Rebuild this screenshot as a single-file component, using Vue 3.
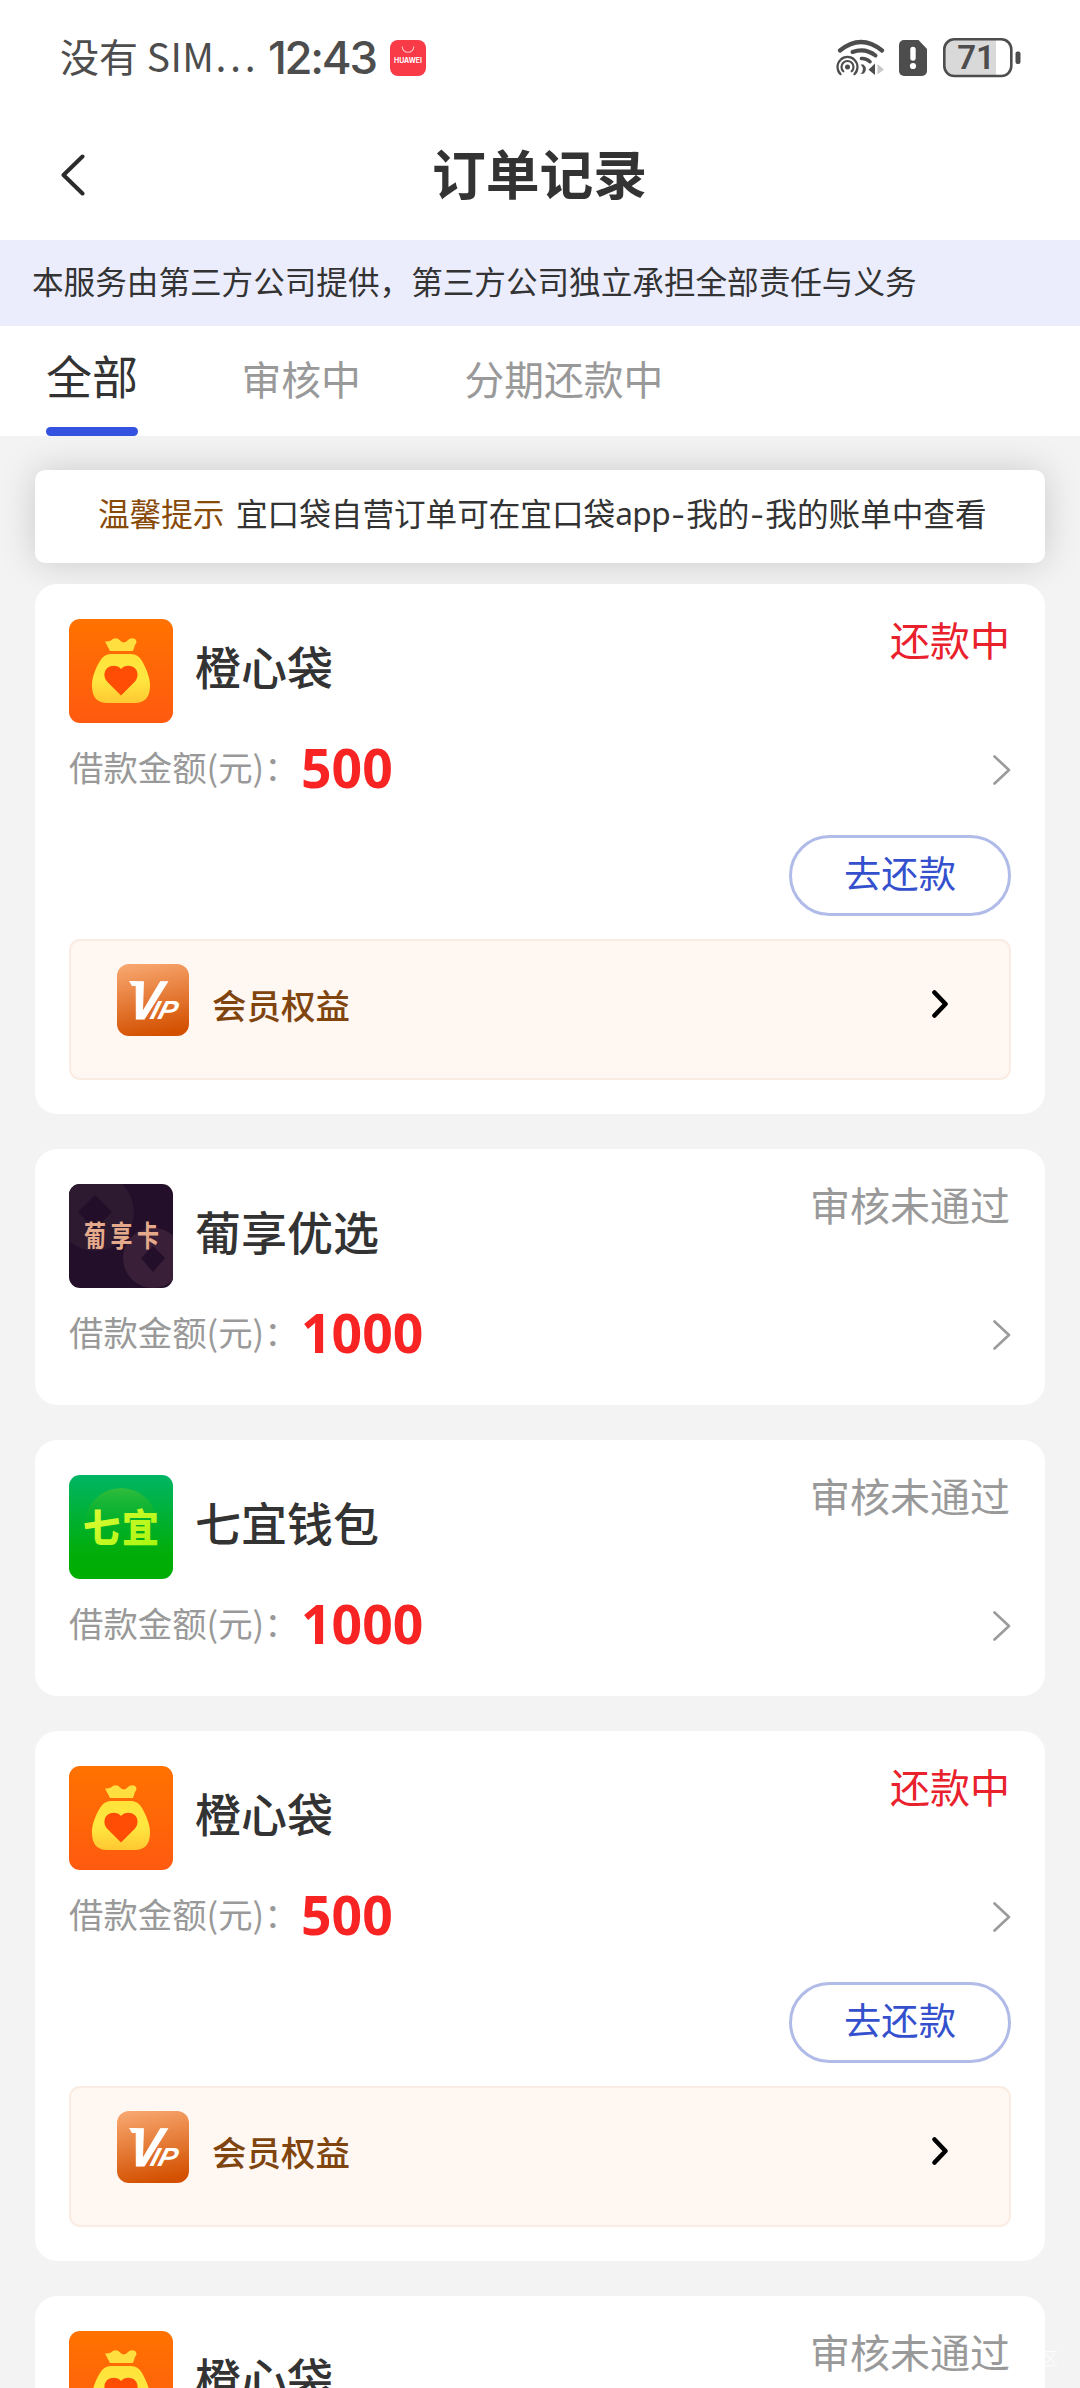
<script setup>
const tabs = [
  { label: '全部', active: true },
  { label: '审核中' },
  { label: '分期还款中' },
]

const orders = [
  { name: '橙心袋', brand: 'orange', amount: 500, status: '还款中', repay: true },
  { name: '葡享优选', brand: 'grape', amount: 1000, status: '审核未通过' },
  { name: '七宜钱包', brand: 'green', amount: 1000, status: '审核未通过' },
  { name: '橙心袋', brand: 'orange', amount: 500, status: '还款中', repay: true },
  { name: '橙心袋', brand: 'orange', amount: 500, status: '审核未通过' },
]
</script>

<template>
  <div class="page">
    <div class="statusbar">
      <span class="carrier">没有 <span class="sim-label">SIM…</span></span>
      <span class="clock">12:43</span>
      <svg class="store" width="36" height="36" viewBox="0 0 36 36">
        <rect width="36" height="36" rx="8" fill="#f93b47" />
        <path d="M12.2 6.5a5.8 5.8 0 0 0 11.6 0" fill="none" stroke="#ffc9cc" stroke-width="1.1" />
        <text x="18" y="23.3" text-anchor="middle" textLength="28" lengthAdjust="spacingAndGlyphs" class="store-text">HUAWEI</text>
      </svg>
      <span class="spacer"></span>
      <svg class="wifi" width="50" height="40" viewBox="0 0 50 40">
        <g fill="none" stroke="#4d4d4d" stroke-linecap="round">
          <path d="M4 12.500Q25-4.500 46 12.500" stroke-width="4.200" />
          <path d="M16.500 14Q29 9.500 39.500 17.500" stroke-width="4" />
          <path d="M25.500 20.500Q30 20 34 23.700" stroke-width="3.600" />
          <path d="M4.600 36.200A10 10 0 1 1 18.400 36.200" stroke-width="2.200" />
          <path d="M7.300 33.300A6 6 0 1 1 15.700 33.300" stroke-width="2.200" />
        </g>
        <circle cx="11.500" cy="29" r="2.500" fill="#4d4d4d" />
        <path d="M24.500 26.500q5 4.500 0 9.500l3.500-.5q4-5-.5-9z" fill="#4d4d4d" />
        <path d="M39 25.500v11.500l-6.500-5.200z" fill="#4d4d4d" />
        <path d="M41.500 26v10.500l6.500-5z" fill="#c8c8c8" />
      </svg>
      <svg class="sim" width="28" height="36" viewBox="0 0 28 36">
        <path d="M5 0h14.500L28 9v22a5 5 0 0 1-5 5H5a5 5 0 0 1-5-5V5a5 5 0 0 1 5-5z" fill="#4d4d4d" />
        <path d="M14 9.500v8.500" stroke="#fff" stroke-width="5.400" stroke-linecap="round" />
        <circle cx="14" cy="26" r="3.100" fill="#fff" />
      </svg>
      <svg class="battery" width="78" height="40" viewBox="0 0 78 40">
        <path d="M12 2h41v36H12A10 10 0 0 1 2 28V12A10 10 0 0 1 12 2z" fill="#d9d9d9" />
        <rect x="1.300" y="1.300" width="67" height="36.700" rx="10" fill="none" stroke="#4d4d4d" stroke-width="2.600" />
        <rect x="72.500" y="13.500" width="5" height="12.500" rx="2" fill="#4d4d4d" />
        <text x="33" y="31" text-anchor="middle" class="battery-text">71</text>
      </svg>
    </div>

    <header class="nav">
      <svg class="back" width="26" height="42" viewBox="0 0 26 42">
        <path d="M22.500 2.500L3.500 21l19 18.500" fill="none" stroke="#2b2b2b" stroke-width="4" stroke-linecap="round" stroke-linejoin="round" />
      </svg>
      <h1>订单记录</h1>
    </header>

    <div class="notice">本服务由第三方公司提供，第三方公司独立承担全部责任与义务</div>

    <nav class="tabs">
      <span v-for="t in tabs" :key="t.label" class="tab" :class="{ active: t.active }">{{ t.label }}</span>
    </nav>

    <main>
      <div class="tip">
        <span class="tip-title">温馨提示</span>
        <span>宜口袋自营订单可在宜口袋</span><span class="latin app">app</span><span class="latin dash">-</span><span>我的</span><span class="latin dash">-</span><span>我的账单中查看</span>
      </div>

      <section v-for="(o, i) in orders" :key="i" class="card">
        <div class="head">
          <svg v-if="o.brand === 'orange'" class="logo" viewBox="0 0 104 104">
            <defs>
              <linearGradient id="orangeBg" x1="0" y1="0" x2="0" y2="1">
                <stop offset="0" stop-color="#ff7200" /><stop offset="1" stop-color="#ff5a10" />
              </linearGradient>
              <linearGradient id="bag" x1="0" y1="0" x2="0" y2="1">
                <stop offset="0" stop-color="#ffe23a" /><stop offset=".5" stop-color="#ffe840" /><stop offset="1" stop-color="#ffc832" />
              </linearGradient>
            </defs>
            <rect width="104" height="104" fill="url(#orangeBg)" />
            <path d="M41 32L36 22.500Q39 22.800 42 21.500C45 18.500 48.500 18.500 51 21.500Q55 25.500 58.500 21.500C61.500 18 67 18.500 67.500 22.500Q67.500 24 66 26L64 32z" fill="#ffdf40" />
            <path d="M42 35H62Q69 35 73 42C78 51 81.500 60 81 68C80.500 79 75 84 66 84H38C29 84 23.500 79 23 68C22.500 60 26 50 31 42Q35 35 42 35z" fill="url(#bag)" />
            <path d="M52 76.500L38 62.500C33.500 57.500 35 49 41.500 47.200Q48 45.500 52 50Q56 45.500 62.500 47.200C69 49 70.500 57.500 66 62.500z" fill="#ff4d05" />
          </svg>
          <svg v-else-if="o.brand === 'grape'" class="logo" viewBox="0 0 104 104">
            <rect width="104" height="104" fill="#230f29" />
            <circle cx="26" cy="28" r="39" fill="#2d1930" />
            <path d="M26 11L43 28 26 45 9 28z" fill="#220e28" />
            <circle cx="84" cy="74" r="30" fill="#392038" />
            <path d="M84 62L96 74 84 88 72 74z" fill="#230f29" />
            <text x="15" y="0" textLength="75" transform="translate(0 62.500) scale(1 1.320)" class="grape-text">葡享卡</text>
          </svg>
          <svg v-else class="logo" viewBox="0 0 104 104">
            <defs>
              <linearGradient id="greenBg" x1="0" y1="0" x2="0" y2="1">
                <stop offset="0" stop-color="#00b564" /><stop offset=".75" stop-color="#00ad09" /><stop offset="1" stop-color="#00ad00" />
              </linearGradient>
              <linearGradient id="greenOrb" x1="0" y1="0" x2="0" y2="1">
                <stop offset="0" stop-color="#32bc3c" /><stop offset=".65" stop-color="#00ad12" stop-opacity="0" />
              </linearGradient>
              <linearGradient id="lime" x1="0" y1="0" x2="1" y2="1">
                <stop offset="0" stop-color="#e9fc3c" /><stop offset="1" stop-color="#a2f50c" />
              </linearGradient>
            </defs>
            <rect width="104" height="104" fill="url(#greenBg)" />
            <circle cx="52" cy="49" r="36" fill="url(#greenOrb)" />
            <text x="14" y="0" textLength="76" transform="translate(0 67) scale(1 1.060)" class="green-text" fill="url(#lime)">七宜</text>
          </svg>
          <span class="name">{{ o.name }}</span>
          <span class="state" :class="{ due: o.repay }">{{ o.status }}</span>
        </div>

        <div class="amount-row">
          <span class="label">借款金额(元)：</span>
          <span class="amount">{{ o.amount }}</span>
          <svg class="more" width="18" height="30" viewBox="0 0 18 30">
            <path d="M1.500 1.500L16 15 1.500 28.500" fill="none" stroke="#9b9b9b" stroke-width="2.600" stroke-linejoin="round" stroke-linecap="round" />
          </svg>
        </div>

        <template v-if="o.repay">
          <div class="actions"><button class="repay">去还款</button></div>
          <div class="vip">
            <svg class="vip-logo" width="72" height="72" viewBox="0 0 72 72">
              <defs>
                <linearGradient id="vipBg" x1=".3" y1="0" x2=".5" y2="1">
                  <stop offset="0" stop-color="#f7a56d" /><stop offset="1" stop-color="#d35000" />
                </linearGradient>
              </defs>
              <rect width="72" height="72" rx="12" fill="url(#vipBg)" />
              <path d="M12 17h8v5h-5z" fill="#fff" />
              <text transform="translate(10 55) skewX(-8)" class="vip-v" textLength="32" lengthAdjust="spacingAndGlyphs">V</text>
              <text transform="translate(32 55) skewX(-16)" class="vip-ip" textLength="26" lengthAdjust="spacingAndGlyphs">IP</text>
            </svg>
            <span class="vip-text">会员权益</span>
            <svg class="go" width="18" height="30" viewBox="0 0 18 30">
              <path d="M3.500 3.500L14.500 15 3.500 26.500" fill="none" stroke="#000" stroke-width="4.600" stroke-linejoin="round" stroke-linecap="round" />
            </svg>
          </div>
        </template>
      </section>
    </main>
    <span class="mark">区</span>
  </div>
</template>

<style>
body {
  margin: 0;
  background: #f3f3f3;
}
</style>

<style scoped>
.page {
  position: relative;
  width: 1080px;
  height: 2388px;
  overflow: hidden;
  background: #f3f3f3;
  color: #333;
  font-family: "Noto Sans CJK SC", sans-serif;
  white-space: nowrap;
}
.statusbar {
  display: flex;
  align-items: center;
  height: 113px;
  padding: 0 59px 0 60px;
  background: #fff;
  color: #4d4d4d;
}
.carrier {
  width: 208px;
  font-size: 39px;
  line-height: 52px;
  margin-top: -3px;
}
.sim-label { letter-spacing: .4px; }
.clock {
  width: 122px;
  margin-top: 3px;
  font: 500 45.500px/56px Inter, "Noto Sans", sans-serif;
  letter-spacing: -2.300px;
}
.store,
.sim,
.battery { margin-top: 3px; }
.store-text {
  font: 700 7px Inter, sans-serif;
  fill: #fff;
}
.spacer { flex: 1; }
.wifi { margin: 2px 13px 0 0; }
.sim { margin-right: 16px; }
.battery-text {
  font: 600 33px Roboto, sans-serif;
  fill: #4d4d4d;
}
.nav {
  display: grid;
  grid-template-columns: 120px 1fr 120px;
  align-items: center;
  height: 127px;
  background: #fff;
}
.back { margin: -3px 0 0 60px; }
.nav h1 {
  margin: -10px 0 0 -1px;
  text-align: center;
  font-size: 53.800px;
  line-height: 76px;
  font-weight: 700;
}
.notice {
  height: 85.500px;
  padding-left: 32px;
  background: #ebedfd;
  font-size: 31.600px;
  line-height: 81px;
}
.tabs {
  display: flex;
  align-items: flex-end;
  gap: 103.500px;
  height: 110px;
  padding-left: 46px;
  background: #fff;
}
.tab {
  height: 110px;
  color: #999;
  font-size: 39.800px;
  line-height: 103px;
}
.tab.active {
  box-sizing: border-box;
  position: relative;
  width: 92px;
  color: #333;
  font-size: 46px;
  line-height: 96px;
}
.tab.active::after {
  content: "";
  position: absolute;
  left: 0;
  bottom: 0;
  width: 92px;
  height: 9px;
  border-radius: 5px;
  background: #3451df;
}
main {
  display: flex;
  flex-direction: column;
  gap: 35px;
  padding: 34px 35px 0;
}
.tip {
  display: flex;
  height: 93px;
  margin-bottom: -13.500px;
  padding-left: 63px;
  border-radius: 10px;
  background: #fff;
  box-shadow: 0 0 36px rgba(0, 0, 0, .17);
  font-size: 31.600px;
  line-height: 85px;
}
.tip-title {
  width: 138px;
  color: #874a09;
}
.latin { font-family: "Noto Sans", sans-serif; }
.app {
  width: 55px;
  letter-spacing: -.5px;
}
.dash {
  width: 16px;
  text-align: center;
  transform: scaleX(1.300);
}
.card {
  position: relative;
  box-sizing: border-box;
  flex: none;
  padding: 34.500px 34px 34px;
  border-radius: 22px;
  background: #fff;
}
.head {
  display: flex;
  height: 103.500px;
}
.logo {
  width: 104px;
  height: 104px;
  border-radius: 11px;
}
.name {
  margin-left: 22px;
  font-size: 46px;
  line-height: 92px;
  font-weight: 500;
}
.state {
  margin: 0 1px 0 auto;
  color: #999;
  font-size: 40px;
  line-height: 40px;
}
.state.due { color: #e9212c; }
.amount-row {
  display: flex;
  align-items: center;
  height: 76px;
  padding-top: 8px;
}
.label {
  width: 232px;
  color: #999;
  font-size: 34.400px;
  line-height: 50px;
  margin-top: -5px;
}
.amount {
  margin-top: -1px;
  color: #f82424;
  font: 700 53.500px/60px "Noto Sans", sans-serif;
}
.more { margin: 4px 0 0 auto; }
.actions {
  display: flex;
  justify-content: flex-end;
  margin-top: 29px;
}
.repay {
  box-sizing: border-box;
  width: 222px;
  height: 81px;
  padding: 0 0 8px;
  border: 3px solid #b0bbe8;
  border-radius: 41px;
  background: #fff;
  color: #3450cd;
  font: 37.300px/66px "Noto Sans CJK SC", sans-serif;
}
.vip {
  box-sizing: border-box;
  display: flex;
  height: 141px;
  margin-top: 23px;
  padding: 23px 60px 0 46px;
  border: 2px solid #faece2;
  border-radius: 11px;
  background: #fff7f2;
}
.vip-v {
  font: italic 700 54px "Liberation Sans", sans-serif;
  fill: #fff;
  stroke: #fff;
  stroke-width: 1px;
}
.vip-ip {
  font: italic 700 26px "Liberation Sans", sans-serif;
  fill: #fff;
}
.vip-text {
  margin-left: 23px;
  color: #80450f;
  font-size: 34.500px;
  line-height: 80px;
  font-weight: 500;
}
.go { margin: 25px 0 0 auto; }
.grape-text {
  font: 700 22px "Noto Sans CJK SC", sans-serif;
  fill: #e5aa8c;
}
.green-text { font: 900 37px "Noto Sans CJK SC", sans-serif; }
.mark {
  position: absolute;
  right: 22px;
  bottom: 18px;
  color: rgba(255, 255, 255, .75);
  font-size: 17px;
  line-height: 24px;
}
</style>
